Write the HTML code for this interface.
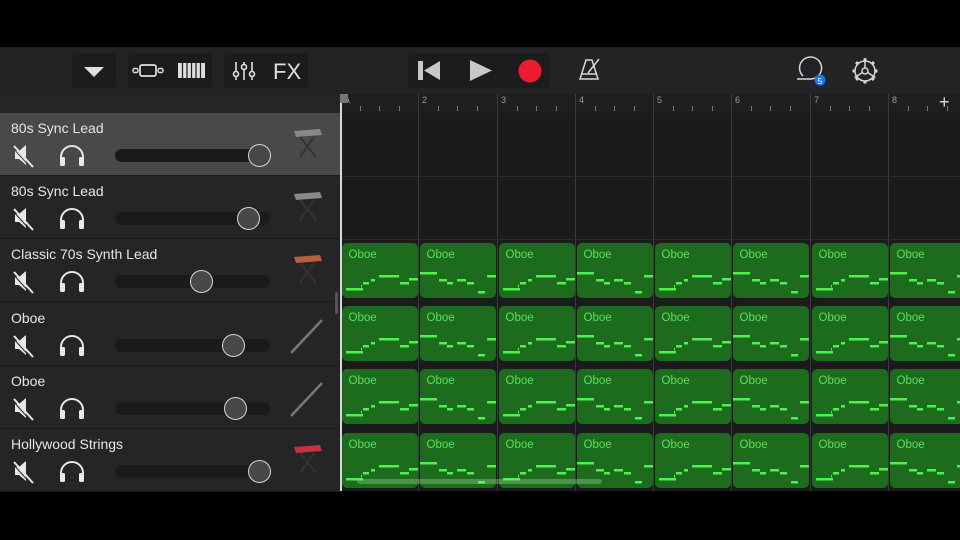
<!DOCTYPE html>
<html><head><meta charset="utf-8"><style>
*{margin:0;padding:0;box-sizing:border-box}
body{width:960px;height:540px;background:#000;position:relative;overflow:hidden;font-family:"Liberation Sans",sans-serif}
.a{position:absolute}
.tb{left:0;top:47px;width:960px;height:47px;background:#232325}
.btn{background:#1c1c1e;border-radius:4px;top:53px;height:35px}
.ruler{left:340px;top:94px;width:620px;height:19px;background:#1f1f21}
.left{left:0;top:94px;width:340px;height:397px;background:#252527}
.tl{left:341px;top:113px;width:619px;height:378px;background:#1b1b1d}
.row{left:0;width:340px;height:63px;border-bottom:1px solid #1c1c1e}
.name{left:11px;top:7px;color:#e6e6e6;font-size:14px}
.slider{left:115px;width:155px;height:13px;background:#1a1a1c;border-radius:7px}
.knob{width:23px;height:23px;border-radius:50%;background:#48484a;border:1.5px solid #d8d8d8}
.cell{width:76px;height:55px;background:#1d6b1d;border-radius:5px;overflow:hidden}
.cell span{position:absolute;left:7px;top:6px;color:#5be05b;font-size:11.5px}
</style></head><body>
<div class="a tb"></div>
<div class="a btn" style="left:72px;width:44px"></div>
<div class="a btn" style="left:128px;width:84px"></div>
<div class="a btn" style="left:224px;width:84px"></div>
<div class="a btn" style="left:408px;width:142px"></div>
<svg class="a" style="left:0;top:47px" width="960" height="47" viewBox="0 0 960 47">
<g fill="#e0e0e0" stroke="#e0e0e0">
<path d="M84 20h20l-10 10z" stroke="none"/>
<rect x="140" y="18" width="16" height="11" rx="2" fill="none" stroke-width="1.7"/>
<rect x="133" y="21.5" width="5" height="4" rx="1.5" fill="none" stroke-width="1.4"/>
<rect x="158" y="21.5" width="5" height="4" rx="1.5" fill="none" stroke-width="1.4"/>
<rect x="178" y="16" width="27" height="15" stroke="none"/>
</g>
<g stroke="#232325" stroke-width="1.3"><path d="M182.5 16v15M187 16v15M191.5 16v15M196 16v15M200.5 16v15"/></g>
<g stroke="#e0e0e0" stroke-width="1.6" fill="none">
<path d="M236 15v18M244 15v18M252 15v18"/>
<circle cx="236" cy="27" r="2.5" fill="#232325"/><circle cx="244" cy="20" r="2.5" fill="#232325"/><circle cx="252" cy="27" r="2.5" fill="#232325"/>
</g>
<text x="273" y="32" fill="#e0e0e0" font-size="22" font-family="Liberation Sans">FX</text>
<g fill="#c8c8c8"><rect x="418" y="14" width="5" height="19"/><path d="M440 14v19l-16-9.5z"/><path d="M470 13v21l22-10.5z"/></g>
<circle cx="530" cy="24" r="11.5" fill="#ee1c30"/>
<g stroke="#d8d8d8" stroke-width="1.5" fill="none"><path d="M586 13h6l6 19h-18z"/><path d="M581 27h16M588 26l11-14"/>
<path d="M797 32h14M811 32a11 11 0 1 0 -8 -3"/>
<circle cx="865" cy="24" r="10"/><circle cx="865" cy="24" r="3"/><path d="M865 21v-10M862.5 25.5l-8 5M867.5 25.5l8 5"/>
<path d="M865 14v-2.5M865 34v2.5M855 24h-2.5M875 24h2.5M857.9 16.9l-1.8-1.8M872.1 31.1l1.8 1.8M872.1 16.9l1.8-1.8M857.9 31.1l-1.8 1.8" stroke-width="3"/></g>
<circle cx="820" cy="33" r="5.5" fill="#1877f2"/><text x="817.5" y="37" fill="#fff" font-size="8.5" font-family="Liberation Sans">5</text>
</svg>
<div class="a left"></div>
<div class="a ruler"></div>
<div class="a tl"></div>
<div id="c"></div>
<div class="a" style="left:340px;top:94px;width:2px;height:397px;background:#d8d8d8"></div>
<div class="a" style="left:340px;top:94px;width:8px;height:9px;background:#777"></div>
<div class="a" style="left:335px;top:292px;width:3px;height:22px;background:#555;border-radius:2px"></div>
<div class="a" style="left:357px;top:479px;width:245px;height:5px;background:rgba(160,230,160,.35);border-radius:3px"></div>
<div class="a" style="left:939px;top:92px;color:#ddd;font-size:18px">+</div>
<script>
var h='';
var names=['80s Sync Lead','80s Sync Lead','Classic 70s Synth Lead','Oboe','Oboe','Hollywood Strings'];
var kn=[259,248,201,233,235,259];
for(var i=0;i<6;i++){var t=113+i*63.2;
h+='<div class="a row" style="top:'+t+'px;background:'+(i==0?'#49494b':'#252527')+'"><div class="a name">'+names[i]+'</div>'+
'<svg class="a" style="left:10px;top:30px" width="80" height="26"><g fill="#e8e8e8"><path d="M5 8h4l7-6v20l-7-6h-4z"/></g><path d="M4 3l19 21" stroke="#e8e8e8" stroke-width="2"/><path d="M4 3l19 21" stroke="'+(i==0?'#49494b':'#252527')+'" stroke-width="1" transform="translate(-2,1)"/>'+
'<path d="M51 20v-6a11 11 0 0 1 22 0v6" fill="none" stroke="#e8e8e8" stroke-width="2"/><rect x="50" y="14" width="5" height="9" rx="1.5" fill="#e8e8e8"/><rect x="69" y="14" width="5" height="9" rx="1.5" fill="#e8e8e8"/></svg>'+
'<div class="a slider" style="top:36px"></div><div class="a knob" style="left:'+(kn[i]-11.5)+'px;top:31px"></div></div>';
}
var ic=['#888','#888','#b8603c','#555','#555','#c8303f'];
for(i=0;i<6;i++){var t=113+i*63.2;
if(i<3||i==5)h+='<svg class="a" style="left:288px;top:'+(t+14)+'px" width="40" height="40"><path d="M6 4l26-2l2 6l-26 2z" fill="'+ic[i]+'"/><path d="M12 10l16 20M26 10l-14 20" stroke="#333" stroke-width="2"/></svg>';
else h+='<svg class="a" style="left:288px;top:'+(t+14)+'px" width="40" height="40"><path d="M34 3L3 36" stroke="#777" stroke-width="2.5"/></svg>';}
var bx=[340,418,497,575,653,731,810,888],lb=['A','2','3','4','5','6','7','8'];
for(var b=0;b<8;b++){h+='<div class="a" style="left:'+bx[b]+'px;top:94px;width:1px;height:397px;background:#3a3a3c"></div><div class="a" style="left:'+(bx[b]+4)+'px;top:95px;color:#999;font-size:9px">'+lb[b]+'</div>';
for(var k=1;k<4;k++)h+='<div class="a" style="left:'+(bx[b]+k*19.5)+'px;top:106px;width:1px;height:5px;background:#777"></div>';}
h+='<div class="a" style="left:341px;top:176px;width:619px;height:1px;background:#2c2c2e"></div><div class="a" style="left:341px;top:239px;width:619px;height:1px;background:#2c2c2e"></div>';
var A=[[4,17,45],[19,1,42],[21,6,39],[29,4,36],[37,20,32],[58,9,39],[67,9,35]];
var B=[[0,17,29],[19,8,36],[27,6,39],[37,9,36],[47,7,39],[58,7,48],[67,9,32]];
for(var r=0;r<4;r++){var t=243+r*63.2;
for(b=0;b<8;b++){var P=(b%2==0)?A:B,s='';
P.forEach(function(n){s+='<rect x="'+n[0]+'" y="'+n[2]+'" width="'+n[1]+'" height="2.5" fill="#4df24d"/>';});
h+='<div class="a cell" style="left:'+(bx[b]+1.5)+'px;top:'+t+'px"><span>Oboe</span><svg class="a" style="left:0;top:0" width="76" height="55">'+s+'</svg></div>';}}
document.getElementById('c').innerHTML=h;
</script>
</body></html>
